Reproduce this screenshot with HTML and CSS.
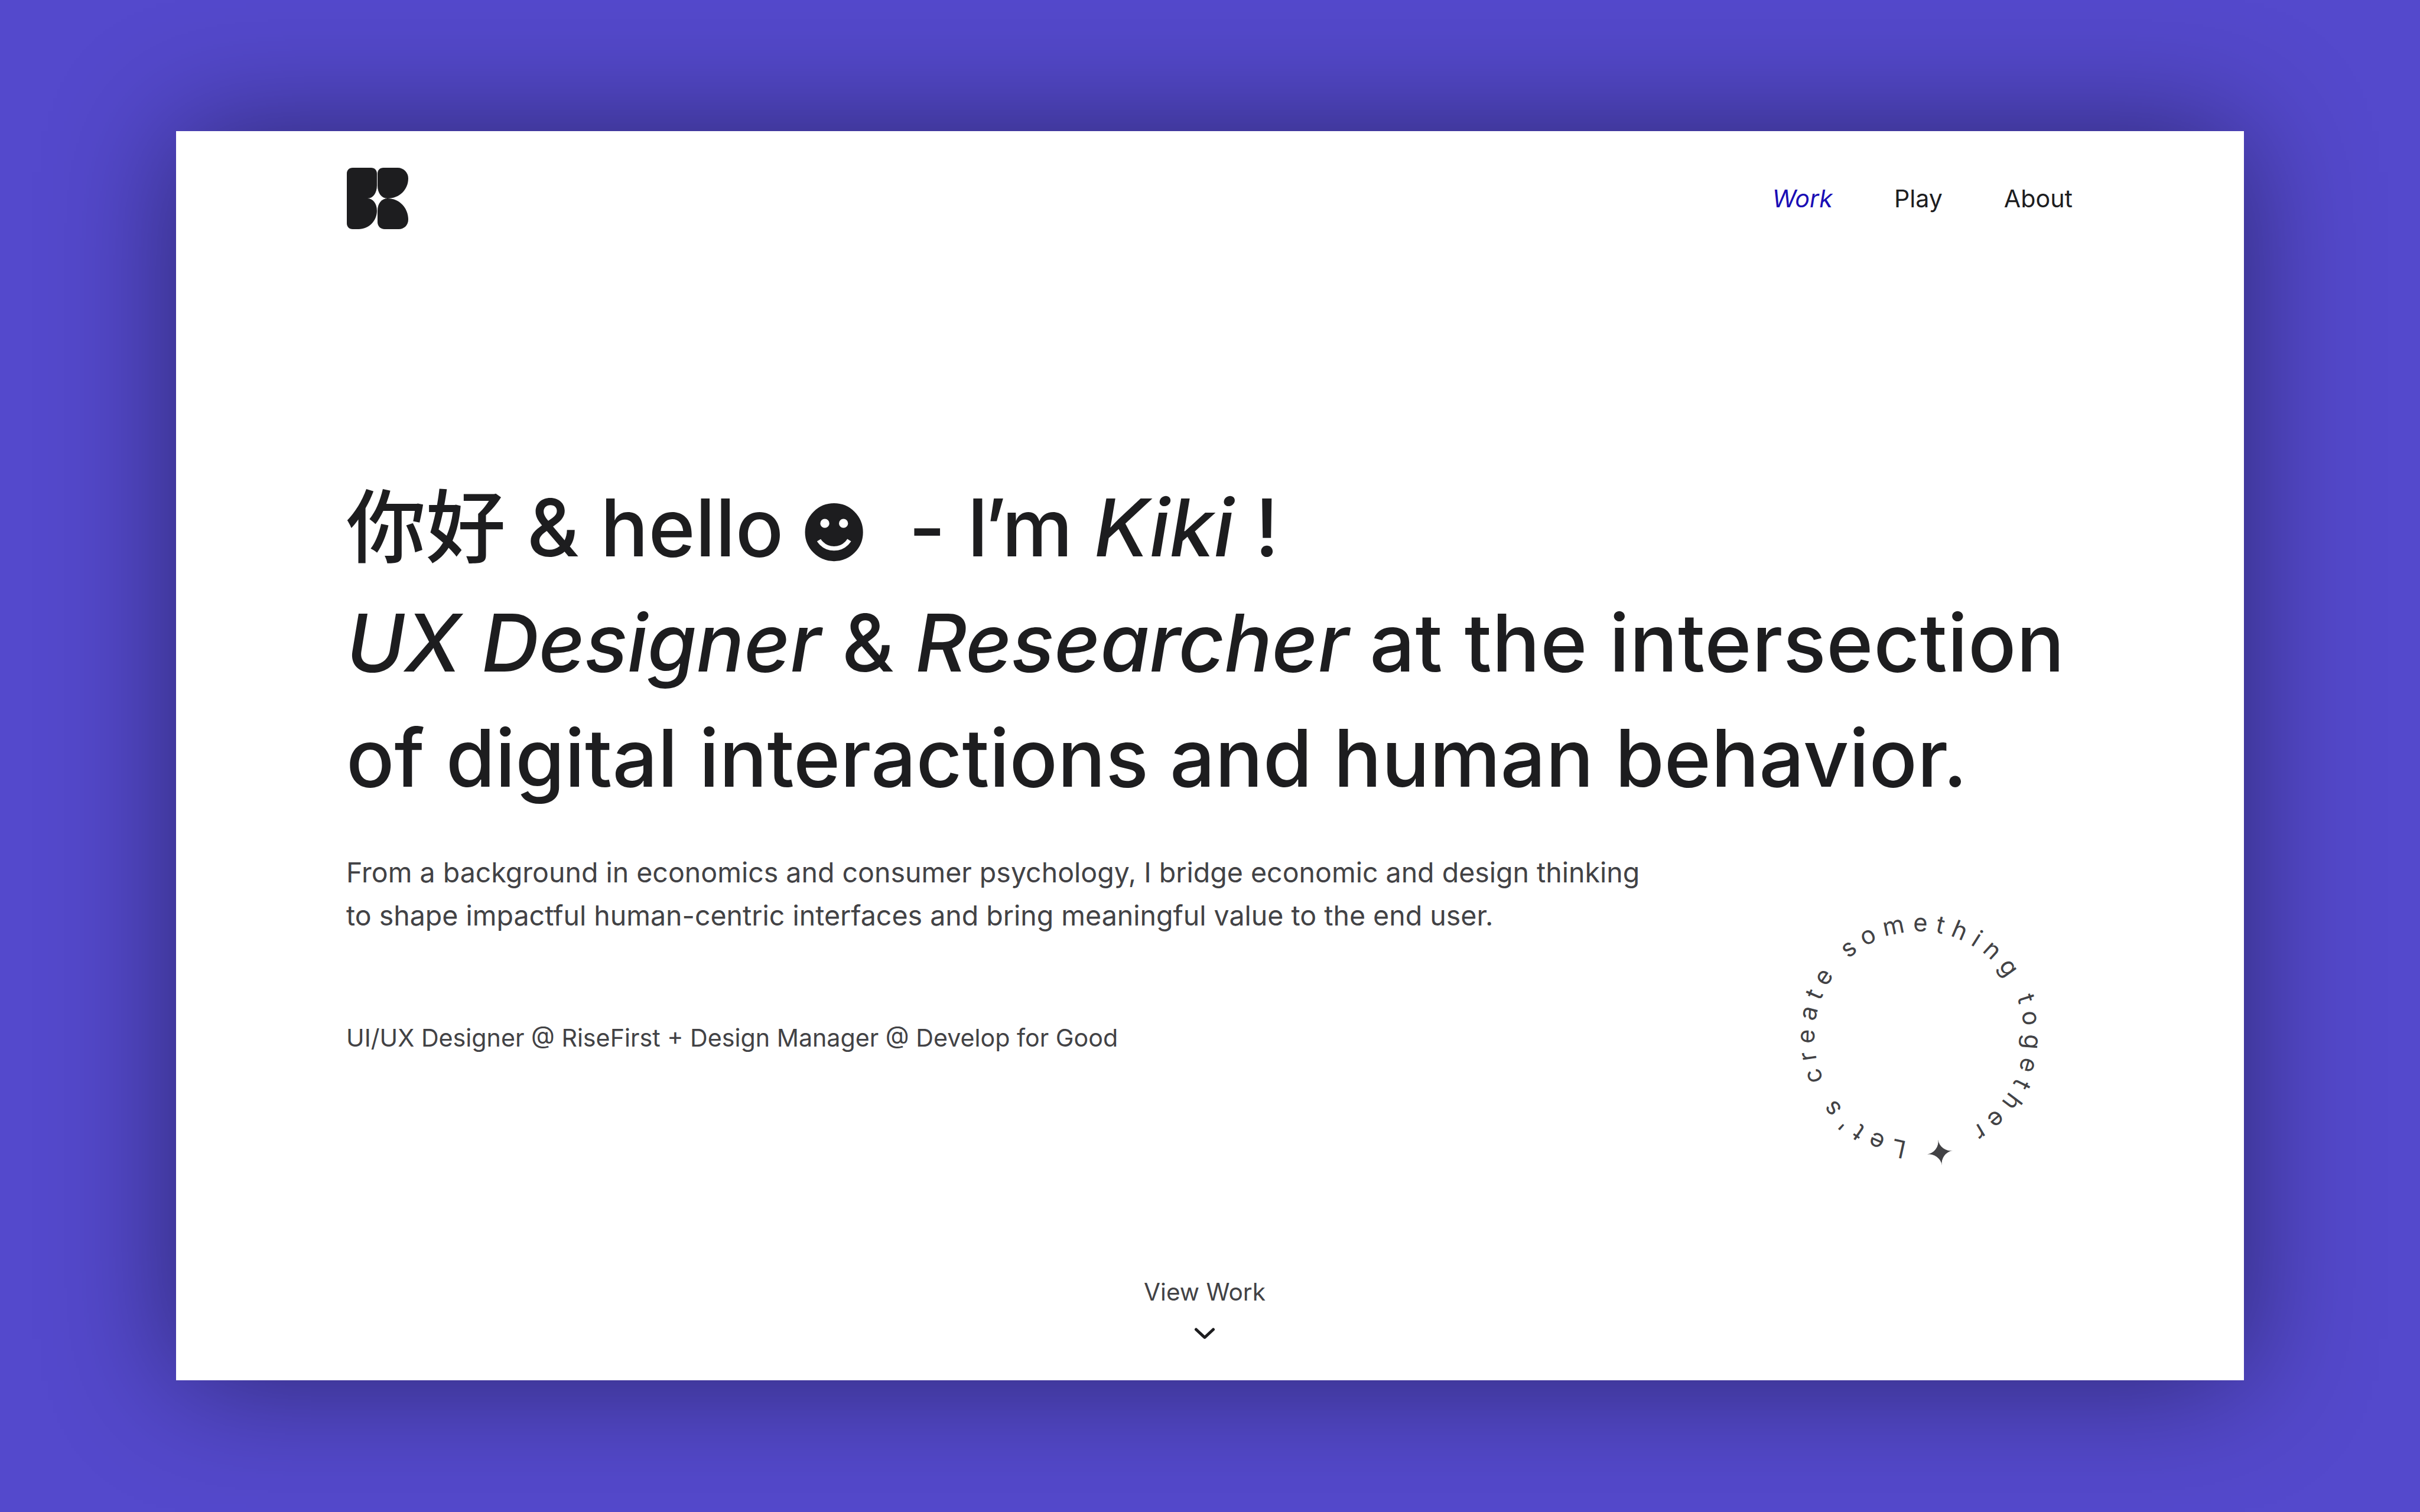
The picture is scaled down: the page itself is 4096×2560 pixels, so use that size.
FILE: index.html
```html
<!DOCTYPE html>
<html lang="en">
<head>
  <meta charset="UTF-8" />
  <title>Kiki — UX Designer &amp; Researcher</title>
  <link rel="stylesheet" href="styles.css">
</head>
<body>
  <div class="window">
    <header class="topbar">
      <svg class="logo" viewBox="0 0 104 104" aria-label="Logo">
        <path d="M10 0H41C47 0 51 4 51 10V30C51 43 44 52 35 52C44 52 51 60 51 73C51 90 37 104 20 104H10C4 104 0 100 0 94V10C0 4 4 0 10 0Z"/>
        <path d="M62 0H86C96 0 104 8 104 18C104 37 89 52 69 52C59 52 52 43 52 30V10C52 4 56 0 62 0Z"/>
        <path d="M69 52C89 52 104 68 104 88C104 97 97 104 88 104H64C57 104 52 99 52 92V73C52 60 59 52 69 52Z"/>
      </svg>
      <nav class="nav">
        <a class="nav-link active">Work</a>
        <a class="nav-link">Play</a>
        <a class="nav-link">About</a>
      </nav>
    </header>

    <main class="hero">
      <h1 class="headline">你好 &amp; hello <span class="smiley">☻</span> &nbsp;- <span class="tight">I’</span>m <em>Kiki</em> !<br>
        <em>UX Designer</em> &amp; <em>Researcher</em> <span class="loose">at the intersection</span><br>
        of digital interactions and human behavior.</h1>
      <p class="intro">From a background in economics and consumer psychology, I bridge economic and design thinking<br>
        to shape impactful human-centric interfaces and bring meaningful value to the end user.</p>
      <p class="role">UI/UX Designer @ RiseFirst + Design Manager @ Develop for Good</p>
    </main>

    <svg class="badge" viewBox="0 0 500 500">
      <path id="ring" fill="none" d="M250 428A177.5 178 0 1 1 251 428"/>
      <text class="badge-text"><textPath href="#ring" startOffset="20">Let's create something together <tspan class="badge-star">✦</tspan></textPath></text>
    </svg>

    <div class="scroll-cue">
      <span>View Work</span>
      <svg class="chevron" viewBox="0 0 36 22"><path d="M3.5 3L18 16.5L32.5 3"/></svg>
    </div>
  </div>
</body>
</html>
```

FILE: styles.css
```css
:root {
  --bg: #5449cc;
  --ink: #1d1d1f;
  --muted: #424245;
  --accent: #1a0db5;
}

* {
  margin: 0;
  padding: 0;
  box-sizing: border-box;
}

html, body {
  height: 100%;
}

body {
  background: var(--bg);
  font-family: Inter, "Noto Sans CJK SC", "DejaVu Sans", sans-serif;
  color: var(--ink);
  padding: 222px 298px;
  overflow: hidden;
}

.window {
  position: relative;
  height: 2115px;
  background: #fff;
  box-shadow: 0 0 200px rgba(0, 0, 0, 0.45);
  display: flex;
  flex-direction: column;
  padding: 62px 290px 0 288px;
}

.topbar {
  display: flex;
  justify-content: space-between;
  align-items: center;
}

.logo {
  width: 104px;
  height: 104px;
  margin-left: 1px;
  fill: var(--ink);
}

.nav {
  display: flex;
  gap: 104px;
}

.nav-link {
  font-size: 41.2px;
}

.active {
  color: var(--accent);
  font-style: italic;
}

.hero {
  margin-top: 408px;
}

.headline {
  font-size: 135px;
  font-weight: 500;
  line-height: 195px;
}

.headline em {
  letter-spacing: -0.5px;
}

.smiley {
  font-family: "DejaVu Sans", sans-serif;
  font-size: 112px;
  line-height: 0;
  margin: 0 -4px 0 -9px;
}

.tight {
  letter-spacing: -7.5px;
}

.loose {
  letter-spacing: 0.6px;
}

.intro {
  margin-top: 60px;
  font-size: 46.5px;
  line-height: 73px;
  color: var(--muted);
}

.role {
  margin-top: 140px;
  font-size: 41.2px;
  line-height: 60px;
  color: var(--muted);
}

.badge {
  position: absolute;
  left: 2700px;
  top: 1283px;
  width: 500px;
  height: 500px;
}

.badge-text {
  font-size: 41.6px;
  letter-spacing: 12.5px;
  fill: var(--muted);
}

.badge-star {
  font-size: 58px;
}

.scroll-cue {
  position: absolute;
  left: 0;
  right: 18px;
  bottom: 67px;
  display: flex;
  flex-direction: column;
  align-items: center;
  font-size: 40.6px;
  color: var(--muted);
}

.chevron {
  width: 36px;
  height: 22px;
  margin-top: 36px;
  fill: none;
  stroke: var(--ink);
  stroke-width: 5;
  stroke-linecap: round;
  stroke-linejoin: round;
}
```
